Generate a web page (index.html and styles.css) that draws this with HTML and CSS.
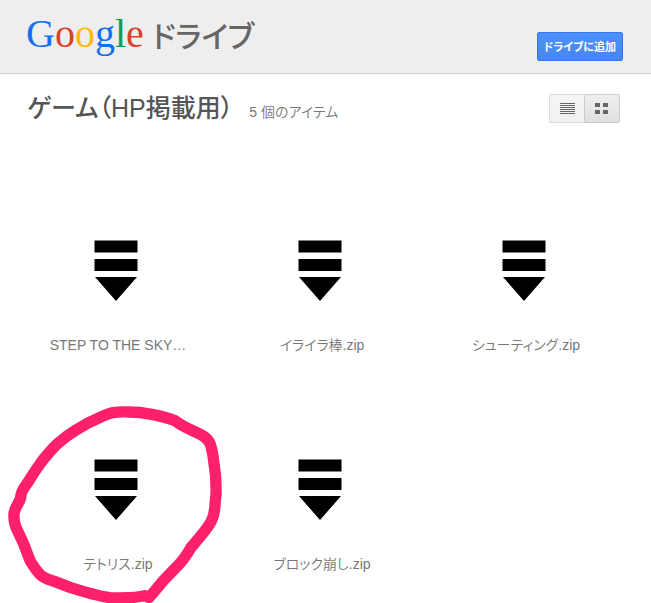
FILE: index.html
```html
<!DOCTYPE html>
<html lang="ja">
<head>
<meta charset="utf-8">
<title>Google ドライブ</title>
<link rel="stylesheet" href="styles.css">
</head>
<body>
<svg class="defs" aria-hidden="true">
  <symbol id="download" viewBox="0 0 48 62">
    <path d="M.5 .5h43v12H.5zM.5 19h43v12H.5zM1 37h42L22 61z"/>
  </symbol>
</svg>
<header class="header">
  <a class="logo" href="#"><span class="google"><span class="blue">G</span><span class="red">o</span><span class="yellow">o</span><span class="blue">g</span><span class="green">l</span><span class="red">e</span></span><span class="product">ドライブ</span></a>
  <button class="add" type="button">ドライブに追加</button>
</header>
<main>
  <div class="toolbar">
    <h1 class="title">ゲーム（HP掲載用）</h1>
    <span class="count">5 個のアイテム</span>
    <div class="views">
      <button class="view" type="button" aria-label="リスト表示">
        <svg width="15" height="11" viewBox="0 0 15 11"><path d="M0 .5h15M0 2.500h15M0 4.500h15M0 6.500h15M0 8.500h15M0 10.500h15" stroke="#666" stroke-width="1"/></svg>
      </button>
      <button class="view active" type="button" aria-label="グリッド表示" aria-pressed="true">
        <svg width="14" height="11" viewBox="0 0 14 11"><path d="M0 0h5v4H0zM8 0h5v4H8zM0 7h5v4H0zM8 7h5v4H8z" fill="#666"/></svg>
      </button>
    </div>
  </div>
  <ul class="files">
    <li><a class="file" href="#"><svg class="icon"><use href="#download"/></svg><span class="name">STEP TO THE SKY…</span></a></li>
    <li><a class="file" href="#"><svg class="icon"><use href="#download"/></svg><span class="name">イライラ棒.zip</span></a></li>
    <li><a class="file" href="#"><svg class="icon"><use href="#download"/></svg><span class="name">シューティング.zip</span></a></li>
    <li class="marked"><a class="file" href="#"><svg class="icon"><use href="#download"/></svg><span class="name">テトリス.zip</span></a>
      <svg class="marker" viewBox="0 0 720 624" aria-hidden="true"><path d="M435 602C410 609 365 609 330 608C300 604 285 598 270 595C245 588 228 583 210 577L165 560C145 553 132 551 120 538C108 526 98 510 92 500C83 482 78 462 68 440L53 408C43 390 41 372 42 355C45 335 58 325 62 308C63 285 73 278 85 260C97 240 106 226 120 207C130 192 138 183 150 170C162 154 175 143 190 132C207 118 223 108 240 98C257 87 273 79 290 72C313 61 325 54 345 52C360 50 372 51 385 51C410 51 435 54 455 58C482 63 505 68 525 77C542 91 562 100 580 108C606 121 623 127 631 148C637 165 640 188 642 205C648 240 649 268 648 300C645 318 646 325 644 342C641 372 630 387 615 407C602 424 588 440 575 455C560 478 552 493 535 510L490 557L465 587L447 608"/></svg>
    </li>
    <li><a class="file" href="#"><svg class="icon"><use href="#download"/></svg><span class="name">ブロック崩し.zip</span></a></li>
  </ul>
</main>
</body>
</html>
```
FILE: styles.css
```css
* {
  box-sizing: border-box;
}

body {
  min-height: 100vh;
  margin: 0;
  background: #fff;
  color: #777;
  font-family: "Liberation Sans", "Noto Sans CJK JP", sans-serif;
  font-size: 14px;
  font-feature-settings: "palt";
}

button {
  font: inherit;
  font-feature-settings: inherit;
  cursor: pointer;
}

a {
  color: inherit;
  text-decoration: none;
}

.defs {
  position: absolute;
  width: 0;
  height: 0;
}

.header {
  display: flex;
  align-items: flex-start;
  justify-content: space-between;
  height: 74px;
  padding: 0 28px 0 26px;
  background: #eee;
  border-bottom: 1px solid #ccc;
}

.logo {
  display: flex;
  align-items: baseline;
  gap: 8px;
  padding-top: 6px;
  line-height: 56px;
}

.google {
  font-family: "Liberation Serif", serif;
  font-size: 40px;
}

.product {
  color: #666;
  font-size: 30px;
  font-weight: 500;
}

.blue { color: #156ef0; }
.red { color: #d9412c; }
.yellow { color: #fdb90b; }
.green { color: #0a9e57; }

.add {
  height: 29px;
  margin-top: 32px;
  padding: 0 6px;
  border: 1px solid #3079ed;
  border-radius: 2px;
  background: linear-gradient(#4d90fe, #4787ed);
  color: #fff;
  font-size: 11px;
  font-weight: bold;
  line-height: 16px;
}

.toolbar {
  display: flex;
  align-items: baseline;
  gap: 16px;
  height: 88px;
  padding: 16px 31px 0 27px;
}

.title {
  margin: 0;
  color: #555;
  font-size: 25px;
  font-weight: 500;
  line-height: 36px;
}

.views {
  display: flex;
  align-self: flex-start;
  margin: 4px 0 0 auto;
}

.view {
  display: flex;
  align-items: center;
  justify-content: center;
  width: 35px;
  height: 29px;
  padding: 0;
  border: 1px solid #dcdcdc;
  border-right: 0;
  border-radius: 2px 0 0 2px;
  background: linear-gradient(#f5f5f5, #f1f1f1);
}

.view.active {
  width: 36px;
  border: 1px solid #ccc;
  border-radius: 0 2px 2px 0;
  background: linear-gradient(#eee, #e0e0e0);
}

.files {
  display: grid;
  grid-template-columns: repeat(auto-fill, 204px);
  margin: 0;
  padding: 0 0 3px 16px;
  list-style: none;
}

.file {
  display: flex;
  flex-direction: column;
  align-items: center;
  height: 219px;
  padding-top: 78px;
}

.icon {
  width: 48px;
  height: 62px;
}

.name {
  margin-top: 32px;
  line-height: 22px;
}

.count,
.name {
  font-weight: 350;
}

.marked {
  position: relative;
}

.marker {
  position: absolute;
  top: 14px;
  left: -16px;
  width: 240px;
  height: 208px;
  pointer-events: none;
  fill: none;
  stroke: #ff206b;
  stroke-width: 34;
  stroke-linecap: round;
  stroke-linejoin: round;
}
```
